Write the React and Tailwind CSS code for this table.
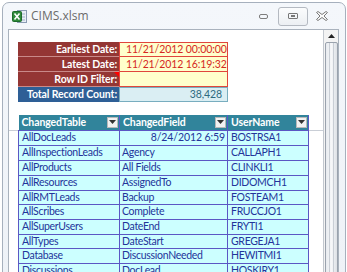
import React from "react";

const rows = [
  ["AllDocLeads", "8/24/2012 6:59", "BOSTRSA1", 15],
  ["AllInspectionLeads", "Agency", "CALLAPH1", 15],
  ["AllProducts", "All Fields", "CLINKLI1", 15],
  ["AllResources", "AssignedTo", "DIDOMCH1", 15],
  ["AllRMTLeads", "Backup", "FOSTEAM1", 14],
  ["AllScribes", "Complete", "FRUCCJO1", 15],
  ["AllSuperUsers", "DateEnd", "FRYTI1", 15],
  ["AllTypes", "DateStart", "GREGEJA1", 14],
  ["Database", "DiscussionNeeded", "HEWITMI1", 15],
  ["Discussions", "DocLead", "HOSKIRY1", 15],
];

function ExcelIcon() {
  return (
    <svg width="15" height="15" viewBox="0 0 15 15">
      <rect x="5.5" y="1.5" width="9" height="12" fill="#e8eef6" stroke="#8a9bb3" />
      <line x1="9" y1="5" x2="13" y2="5" stroke="#9fb0c6" />
      <line x1="9" y1="8" x2="13" y2="8" stroke="#9fb0c6" />
      <line x1="9" y1="11" x2="13" y2="11" stroke="#9fb0c6" />
      <rect x="0.5" y="2.5" width="9" height="10" rx="1" fill="#2f8a3c" stroke="#1d6b2a" />
      <path d="M2.5 4.5 L7.5 10.5 M7.5 4.5 L2.5 10.5" stroke="#fff" strokeWidth="1.6" />
    </svg>
  );
}

function FilterBtn() {
  return (
    <div className="w-[11px] h-[11px] shrink-0 bg-[#f2f2f2] border border-[#b8b8b8] flex items-center justify-center">
      <svg width="7" height="4" viewBox="0 0 7 4">
        <path d="M0 0 H7 L3.5 4 Z" fill="#333" />
      </svg>
    </div>
  );
}

export default function App() {
  const base = "font-['Lato',sans-serif] leading-none whitespace-nowrap";
  const txt = `${base} text-[10.5px] tracking-[-0.3px]`;
  const bold = `${base} text-[10.5px] font-bold tracking-[-0.1px]`;
  const num = `${base} text-[10.5px] tracking-[-0.1px]`;
  return (
    <div className="w-[347px] h-[272px] bg-white overflow-hidden">
      <div className="ml-[2px] mt-[2px] w-[344px] h-[280px] border border-[#a6b0bd] rounded-t-[7px] bg-gradient-to-b from-[#f4f7fb] to-[#eef2f7] flex flex-col">
        {/* title bar */}
        <div className="h-[26px] flex items-center pl-[9px] pr-[17px]">
          <ExcelIcon />
          <span className="ml-[4px] text-[12px] text-[#6b6b6b] font-['Open_Sans',sans-serif]">CIMS.xlsm</span>
          <div className="ml-auto flex items-center">
            <div className="w-[9px] h-[5px] border border-[#7d7d7d] rounded-[2px] mr-[10px]" />
            <div className="w-[30px] h-[19px] border border-[#b4b9c1] rounded-[3px] bg-gradient-to-b from-[#fbfcfd] to-[#eceff3] flex items-center justify-center mr-[8px]">
              <div className="w-[10px] h-[6px] border border-[#777] rounded-[1px] flex items-center justify-center">
                <div className="w-[4px] h-[2px] bg-[#777]" />
              </div>
            </div>
            <svg width="12" height="10" viewBox="0 0 12 10">
              <path d="M0.5 1.5 L2 0.5 L6 3.5 L10 0.5 L11.5 1.5 L8 5 L11.5 8.5 L10 9.5 L6 6.5 L2 9.5 L0.5 8.5 L4 5 Z" fill="#fafafa" stroke="#7a7a7a" />
            </svg>
          </div>
        </div>
        {/* client */}
        <div className="ml-[5px] mr-[6px] flex-1 border border-[#a9b2bd] bg-white flex">
          <div className="flex-1 pl-[9px] pt-[12px] relative">
            {/* header block */}
            <div className="flex flex-col w-[210px]">
              {[
                ["Earliest Date:", "11/21/2012 00:00:00"],
                ["Latest Date:", "11/21/2012 16:19:32"],
                ["Row ID Filter:", ""],
              ].map(([l, v], i) => (
                <div key={i} className="flex h-[15px]">
                  <div className={`${bold} relative w-[101px] bg-[#943634] border-b border-[#c98a89] text-white flex items-center justify-end pr-[2px]`}>
                    {l}
                    {i === 2 && (
                      <div className="absolute top-0 right-0 w-0 h-0 border-t-[5px] border-t-[#ff0000] border-l-[5px] border-l-transparent" />
                    )}
                  </div>
                  <div className={`${num} w-[109px] bg-[#ffffcc] border border-[#e0453c] ${i > 0 ? "border-t-0" : ""} text-[#d5281f] flex items-center pl-[6px]`}>
                    {v}
                  </div>
                </div>
              ))}
              <div className="flex h-[15px]">
                <div className={`${bold} w-[101px] bg-[#2e5f96] text-white flex items-center justify-end pr-[2px]`}>
                  Total Record Count:
                </div>
                <div className={`${num} w-[109px] bg-[#daeef3] border border-[#78adbf] text-[#2e6b80] flex items-center justify-end pr-[5px]`}>
                  38,428
                </div>
              </div>
            </div>
            {/* freeze line */}
            <div className="absolute left-0 right-0 top-[100px] h-px bg-[#c9ced6]" />
            {/* table */}
            <table className="mt-[13px] border-collapse relative table-fixed">
              <thead>
                <tr className="h-[15px]">
                  {["ChangedTable", "ChangedField", "UserName"].map((h, i) => (
                    <th
                      key={h}
                      className={`${bold} p-0 bg-[#31849b] text-white text-left border-r border-[#5b57c4] ${
                        i === 0 ? "w-[101px]" : i === 1 ? "w-[108px]" : "w-[81px]"
                      }`}
                    >
                      <div className="flex items-center justify-between pl-[3px] pr-[1px]">
                        <span>{h}</span>
                        <FilterBtn />
                      </div>
                    </th>
                  ))}
                </tr>
              </thead>
              <tbody>
                {rows.map(([a, b, c, h], i) => (
                  <tr key={i} style={{ height: h }}>
                    <td className={`${txt} p-0 pl-[3px] bg-[#ccffff] text-[#23349a] border border-[#5b57c4] overflow-hidden`}>{a}</td>
                    <td className={`${i === 0 ? num : txt} p-0 px-[2px] bg-[#ccffff] text-[#23349a] border border-[#5b57c4] overflow-hidden ${i === 0 ? "text-right" : ""}`}>{b}</td>
                    <td className={`${txt} p-0 pl-[3px] bg-[#ccffff] text-[#23349a] border border-[#5b57c4] overflow-hidden`}>{c}</td>
                  </tr>
                ))}
              </tbody>
            </table>
          </div>
          {/* scrollbar */}
          <div className="w-[15px] border-l border-[#c3c8cf] bg-[#f3f3f3] flex flex-col items-center">
            <div className="h-[12px] w-full flex items-center justify-center">
              <svg width="7" height="4" viewBox="0 0 7 4">
                <path d="M3.5 0 L7 4 H0 Z" fill="#222" />
              </svg>
            </div>
            <div className="w-[13px] flex-1 border border-[#9aa2ad] rounded-[2px] bg-gradient-to-r from-[#e8ebef] via-[#f6f7f9] to-[#dde1e6] flex justify-center">
              <div className="w-[5px] border-x border-[#c9ced5]" />
            </div>
          </div>
        </div>
      </div>
    </div>
  );
}
